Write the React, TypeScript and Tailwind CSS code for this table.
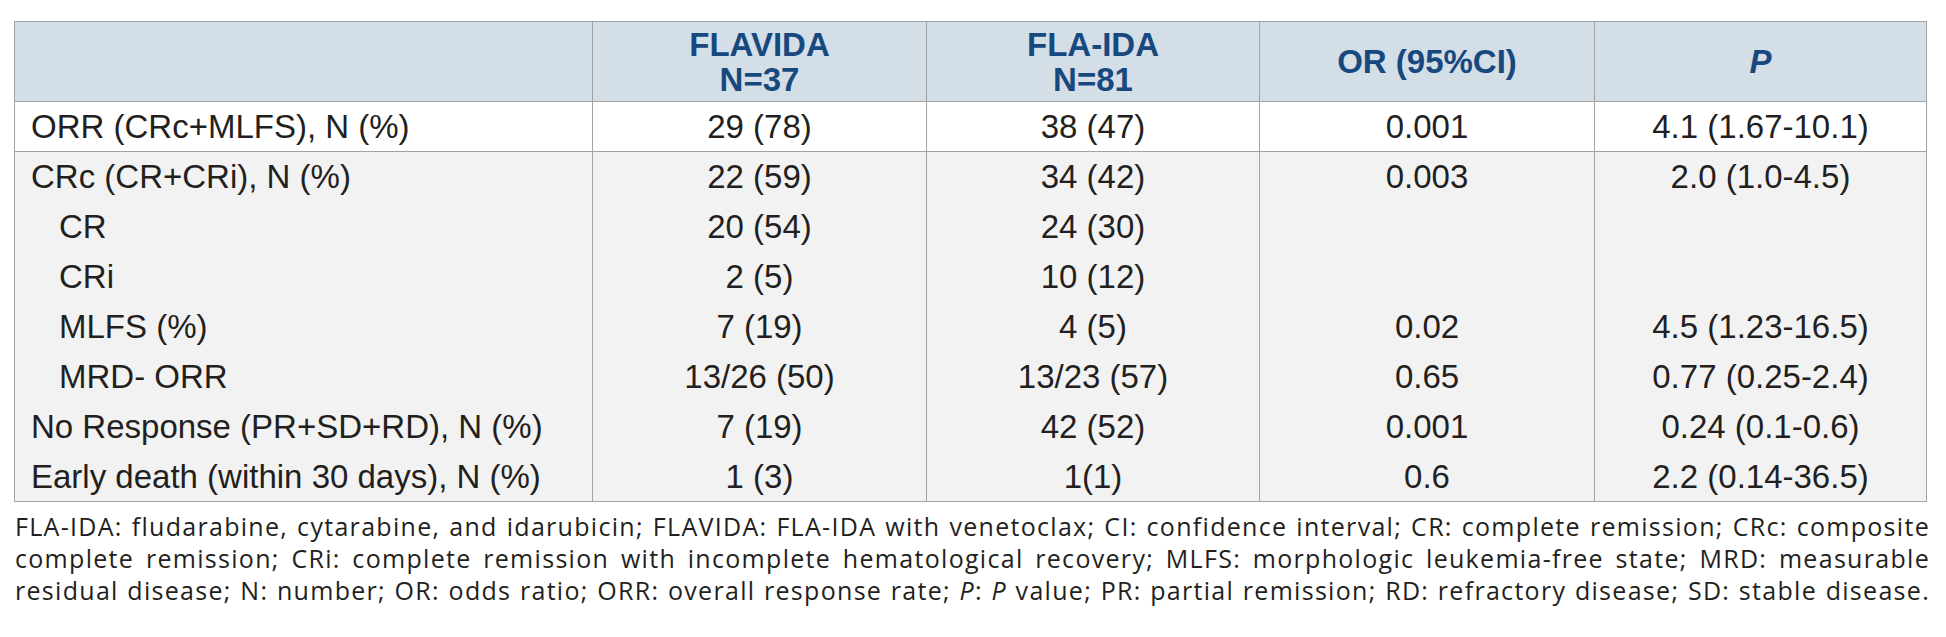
const rows: { label: string; sub?: boolean; a: string; b: string; or: string; p: string }[] = [
  { label: "CRc (CR+CRi), N (%)", a: "22 (59)", b: "34 (42)", or: "0.003", p: "2.0 (1.0-4.5)" },
  { label: "CR", sub: true, a: "20 (54)", b: "24 (30)", or: "", p: "" },
  { label: "CRi", sub: true, a: "2 (5)", b: "10 (12)", or: "", p: "" },
  { label: "MLFS (%)", sub: true, a: "7 (19)", b: "4 (5)", or: "0.02", p: "4.5 (1.23-16.5)" },
  { label: "MRD- ORR", sub: true, a: "13/26 (50)", b: "13/23 (57)", or: "0.65", p: "0.77 (0.25-2.4)" },
  { label: "No Response (PR+SD+RD), N (%)", a: "7 (19)", b: "42 (52)", or: "0.001", p: "0.24 (0.1-0.6)" },
  { label: "Early death (within 30 days), N (%)", a: "1 (3)", b: "1(1)", or: "0.6", p: "2.2 (0.14-36.5)" },
];

export default function App() {
  const th = "border border-[#a3a3a3] align-middle text-center font-bold text-[#17497f] leading-[35px]";
  return (
    <div className="w-[1946px] h-[637px] bg-white pl-[14px] pt-[21px] font-['Liberation_Sans',Arial,sans-serif]">
      <table className="w-[1912px] table-fixed border-collapse text-[33px] text-[#231f20]">
        <colgroup>
          <col className="w-[578px]" />
          <col className="w-[334px]" />
          <col className="w-[333px]" />
          <col className="w-[335px]" />
          <col className="w-[332px]" />
        </colgroup>
        <thead>
          <tr className="h-[80px] bg-[#d4dee7]">
            <th className={th}></th>
            <th className={th}>
              FLAVIDA
              <br />
              N=37
            </th>
            <th className={th}>
              FLA-IDA
              <br />
              N=81
            </th>
            <th className={th}>OR (95%CI)</th>
            <th className={th}>
              <i>P</i>
            </th>
          </tr>
        </thead>
        <tbody className="leading-none">
          <tr className="h-[50px] bg-white">
            <td className="border border-[#a3a3a3] pl-[16px] align-middle">ORR (CRc+MLFS), N (%)</td>
            <td className="border border-[#a3a3a3] text-center align-middle">29 (78)</td>
            <td className="border border-[#a3a3a3] text-center align-middle">38 (47)</td>
            <td className="border border-[#a3a3a3] text-center align-middle">0.001</td>
            <td className="border border-[#a3a3a3] text-center align-middle">4.1 (1.67-10.1)</td>
          </tr>
          {rows.map((r, i) => {
            const last = i === rows.length - 1;
            const cell = last
              ? "border-x border-b border-[#a3a3a3] text-center align-middle"
              : "border-x border-[#a3a3a3] text-center align-middle";
            return (
              <tr key={r.label} className="h-[50px] bg-[#f2f2f2]">
                <td className={`${last ? "border-x border-b" : "border-x"} border-[#a3a3a3] align-middle ${r.sub ? "pl-[44px]" : "pl-[16px]"}`}>
                  {r.label}
                </td>
                <td className={cell}>{r.a}</td>
                <td className={cell}>{r.b}</td>
                <td className={cell}>{r.or}</td>
                <td className={cell}>{r.p}</td>
              </tr>
            );
          })}
        </tbody>
      </table>
      <div className="mt-[8px] w-[1916px] pl-[1px] font-['Open_Sans',sans-serif] text-[25px] tracking-[1.3px] leading-[32px] text-[#231f20]">
        <div className="text-justify [text-align-last:justify]">
          FLA-IDA: fludarabine, cytarabine, and idarubicin; FLAVIDA: FLA-IDA with venetoclax; CI: confidence interval; CR: complete remission; CRc: composite
        </div>
        <div className="text-justify [text-align-last:justify]">
          complete remission; CRi: complete remission with incomplete hematological recovery; MLFS: morphologic leukemia-free state; MRD: measurable
        </div>
        <div className="text-justify [text-align-last:justify]">
          residual disease; N: number; OR: odds ratio; ORR: overall response rate; <i>P</i>: <i>P</i> value; PR: partial remission; RD: refractory disease; SD: stable disease.
        </div>
      </div>
    </div>
  );
}
